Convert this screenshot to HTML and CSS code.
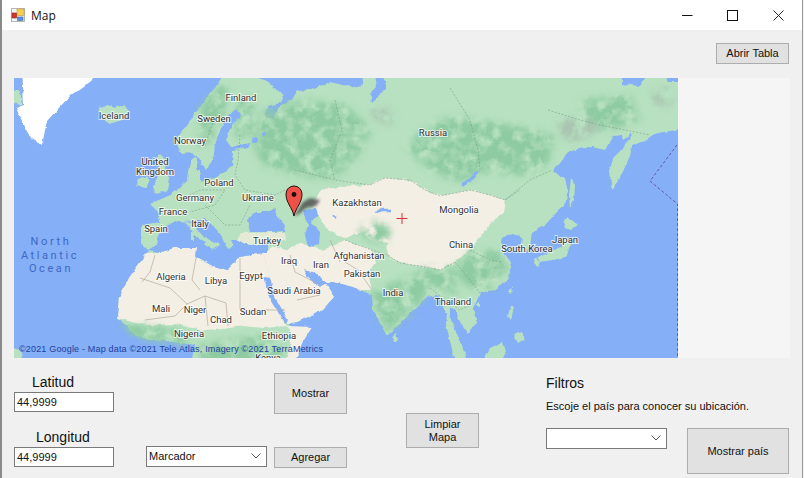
FILE: index.html
```html
<!DOCTYPE html>
<html lang="es">
<head>
  <meta charset="UTF-8" />
  <title>Map</title>
  <link rel="stylesheet" href="styles.css">
</head>
<body>

  <div class="window">
    <div class="titlebar">
      <svg class="app-icon" viewBox="0 0 14 14" width="14" height="14">
        <rect x="0.5" y="0.5" width="13" height="13" fill="#f4f4f4" stroke="#b5b5b5"/>
        <rect x="6" y="1" width="7" height="6.5" fill="#f5cf55" stroke="#c99a2a" stroke-width="0.6"/>
        <rect x="1" y="5" width="4.5" height="5" fill="#d8342c" stroke="#8c1f1a" stroke-width="0.6"/>
        <rect x="6.5" y="9" width="5.5" height="3.5" fill="#5b8fd8" stroke="#3a68a8" stroke-width="0.6"/>
      </svg>
      <span class="title">Map</span>
      <div class="win-buttons">
        <div class="win-btn">
          <svg viewBox="0 0 11 11" width="11" height="11"><path d="M0 5.5H10.5" stroke="#111" fill="none"/></svg>
        </div>
        <div class="win-btn">
          <svg viewBox="0 0 11 11" width="11" height="11"><rect x="0.5" y="0.5" width="10" height="10" stroke="#111" fill="none"/></svg>
        </div>
        <div class="win-btn">
          <svg viewBox="0 0 11 11" width="11" height="11"><path d="M0.5 0.5L10.5 10.5M10.5 0.5L0.5 10.5" stroke="#111" fill="none" stroke-width="0.9"/></svg>
        </div>
      </div>
    </div>

    <div class="toolbar">
      <button class="btn btn-tabla">Abrir Tabla</button>
    </div>

    <div class="map-box">
      <svg class="map" viewBox="14 78 664 280" width="664" height="280">
        <defs>
          <filter id="mottle" filterUnits="userSpaceOnUse" x="0" y="60" width="700" height="310" color-interpolation-filters="sRGB">
            <feGaussianBlur in="SourceGraphic" stdDeviation="3.5" result="b"/>
            <feTurbulence type="fractalNoise" baseFrequency="0.08" numOctaves="3" seed="4"/>
            <feColorMatrix values="0 0 0 0 0  0 0 0 0 0  0 0 0 0 0  3 0 0 0 -0.75"/>
            <feComposite in="b" operator="in"/>
          </filter>
          <filter id="coast" filterUnits="userSpaceOnUse" x="0" y="60" width="700" height="310" color-interpolation-filters="sRGB">
            <feTurbulence type="fractalNoise" baseFrequency="0.14" numOctaves="3" seed="7" result="n"/>
            <feDisplacementMap in="SourceGraphic" in2="n" scale="4" xChannelSelector="R" yChannelSelector="G"/>
            <feGaussianBlur stdDeviation="0.4"/>
          </filter>
          <filter id="shade" x="-30%" y="-30%" width="160%" height="160%"><feGaussianBlur stdDeviation="1.5"/></filter>
        </defs>
        <rect class="ocean" x="14" y="78" width="664" height="280"/>

        <g filter="url(#coast)">
          <!-- tierra -->
          <path class="land" d="M227 68L258 68 258 78 273 86 283 95 280 103 268 106 265 115 273 120 278 108 292 100 297 91 308 90 317 87 330 82 342 85 353 86 358 88 363 83 362 68 690 68 690 115 677 130 670 131 657 133 647 140 632 146 630 156 620 178 612 190 609 171 613 158 625 146 633 133 623 140 622 135 613 136 605 150 592 147 573 150 563 158 553 171 565 178 568 191 565 205 557 212 545 225 533 232 531 245 525 253 520 248 522 238 513 234 503 236 502 243 505 253 512 267 507 280 493 290 480 293 473 310 477 323 467 333 460 322 457 313 450 307 450 318 445 310 437 295 427 297 407 317 387 336 373 310 372 295 360 290 347 285 333 282 325 282 335 297 323 310 297 322 288 324 292 327 312 327 302 343 293 368 190 368 195 345 181 343 165 341 150 340 135 335 124 323 117 317 119 298 129 278 147 253 148 250 141 243 141 225 160 222 158 212 150 204 168 196 178 190 188 180 191 160 197 158 197 170 205 170 199 158 192 153 182 154 174 140 181 133 194 115 207 98 217 85Z"/>
          <path class="land" d="M447 312L453 325 462 345 468 368 456 368 450 340 446 325Z"/>
          <path class="land" d="M6 345L20 350 24 368 6 368Z"/>
          <path class="land" d="M6 92L19 90 22 98 22 106 17 104 6 100Z"/>
          <path class="land" d="M478 368L490 348 503 342 506 352 498 368Z"/>

          <!-- bosque -->
          <g filter="url(#mottle)">
            <path class="forest" d="M262 112L300 100 345 105 372 130 355 160 335 178 300 176 262 165 250 135Z"/>
            <path class="forest" d="M405 145L440 118 470 118 510 125 555 135 548 165 525 175 480 172 465 182 440 175 420 162Z"/>
            <path class="forest" d="M200 108L215 90 228 82 226 112 212 140 200 148Z"/>
            <path class="forest" d="M236 100L255 98 250 135 236 140Z"/>
            <path class="forest" d="M580 100L630 95 640 120 610 130 585 125Z"/>
            <path class="snow" d="M558 120L590 118 600 130 575 142 560 135Z"/>
            <path class="snow" d="M652 90L672 88 672 105 655 105Z"/>
            <path class="snow" d="M372 105L395 112 392 125 372 118Z"/>
          </g>

          <!-- desierto -->
          <path class="sand" d="M117 318L119 298 129 278 147 253 161 252 174 248 197 248 196 257 211 265 227 270 240 257 263 252 270 278 285 322 287 326 263 328 244 326 207 331 174 324 147 326Z"/>
          <path class="sand" d="M288 326L312 327 302 343 293 368 284 368 291 340Z"/>
          <path class="sand" d="M263 252L275 246 285 250 300 243 315 248 322 250 335 245 345 240 358 245 372 250 376 262 368 272 372 290 360 290 347 285 333 282 325 282 335 297 323 310 297 322 288 323 272 303 270 278Z"/>
          <path class="sand" d="M312 205L320 190 345 186 370 185 385 178 410 180 425 190 440 196 470 190 490 195 505 200 503 213 492 222 480 236 470 250 455 262 440 270 420 266 400 263 387 255 388 243 370 240 362 232 345 238 330 232 322 222Z"/>

          <g filter="url(#mottle)">
            <path class="forest" d="M358 230L372 222 390 226 388 242 370 242Z"/>
            <path class="forest" d="M372 292L420 272 432 282 425 297 407 317 388 333 376 310Z"/>
            <path class="forest" d="M470 252L498 250 508 270 490 288 470 288 452 272Z"/>
            <path class="forest" d="M420 268L450 268 458 296 440 294Z"/>
            <path class="forest" d="M200 345L260 335 285 345 280 368 200 368Z"/>
            <path class="forest" d="M120 322L180 330 190 345 135 338Z"/>
          </g>

          <!-- mares -->
          <path class="sea" d="M236 109L228 118 220 130 215 145 213 160 205 170 200 170 200 182 215 178 225 172 232 165 233 150 250 147 250 143 231 147 226 140 232 125 240 115Z"/>
          <path class="sea" d="M148 250L158 244 157 238 166 226 178 221 190 222 205 218 215 228 226 240 235 240 250 245 268 243 268 252 240 257 227 270 211 265 196 257 197 248 174 248 161 252Z"/>
          <path class="sea" d="M247 220L256 212 270 212 277 208 276 216 285 225 284 231 270 232 250 232Z"/>
          <path class="sea" d="M303 212L316 208 318 214 311 222 320 232 319 245 308 247 305 235 308 225Z"/>
          <path class="sea" d="M263 277L270 278 275 297 288 320 285 323 272 303Z"/>
          <path class="sea" d="M303 270L313 272 327 282 320 287 308 278Z"/>
          <path class="sea" d="M373 68L380 68 387 88 372 102 370 94 376 88Z"/>
          <path class="sea" d="M622 68L652 68 640 86 622 84Z"/>
          <path class="sea" d="M664 68L690 68 690 82 668 82Z"/>
          <path class="sea-line" d="M462 186L470 180 478 171"/>
          <path class="sea-line" d="M376 212L382 210 391 210"/>
          <path class="sea-line" d="M333 216L336 218"/>
          <circle class="sea" cx="255" cy="140" r="3"/>
          <circle class="sea" cx="264" cy="134" r="2"/>

          <!-- islas y penínsulas -->
          <path class="ice" d="M22 68L105 68 84 86 71 95 57 110 47 121 42 145 31 138 22 121 16 108 24 105Z"/>
          <path class="land" d="M99 107L108 105 115 108 124 105 129 113 122 120 110 124 100 118Z"/>
          <path class="land" d="M137 186L138 179 146 176 149 180 146 188Z"/>
          <path class="land" d="M153 188L157 178 160 168 154 160 160 154 166 160 165 170 170 180 168 190 156 194Z"/>
          <path class="land" d="M185 222L193 224 202 235 214 243 218 241 219 246 212 250 208 244 196 236Z"/>
          <path class="land" d="M222 225L230 238 234 246 228 249 224 240 219 232Z"/>
          <path class="land" d="M191 232L194 232 194 240 191 240Z"/>
          <path class="land" d="M203 243L211 243 208 247Z"/>
          <path class="sand-light" d="M240 233L285 232 286 241 268 243 250 245 236 240Z"/>
          <path class="land" d="M537 257L548 252 560 248 567 236 570 245 566 257 552 260 540 262Z"/>
          <path class="land" d="M563 222L568 217 578 225 570 230 565 228Z"/>
          <path class="land" d="M535 258L540 262 538 267 534 263Z"/>
          <path class="land" d="M571 178L575 186 574 200 570 208 569 195Z"/>
          <path class="land" d="M509 293L513 286 512 294Z"/>
          <path class="land" d="M475 305L480 302 480 307Z"/>
          <path class="land" d="M510 307L514 307 511 320 508 316Z"/>
          <path class="land" d="M514 334L522 331 525 340 518 342Z"/>
          <path class="land" d="M393 335L396 333 398 340 394 342Z"/>
        </g>

        <!-- fronteras -->
        <path class="border" d="M295 170L335 180 370 185 385 178 410 180 425 190 440 196 470 190 490 195 505 200 520 190"/>
        <path class="border" d="M345 240L358 245 372 250 387 255 400 263 420 266 440 270 455 262"/>
        <path class="border" d="M335 100L342 130 330 160 335 180M450 88L470 120 478 150 480 170M548 110L580 120 600 125 650 135M505 200L530 180 552 170"/>
        <path class="border" d="M470 250L490 260 502 262M455 262L470 280 480 293M430 288L445 300 460 310 470 305"/>
        <path class="border" d="M240 135L238 160 235 175 245 190 275 195 295 185M214 120L205 145"/>
        <path class="border" d="M180 200L200 190 225 190 215 205 190 212M205 205L225 225 240 225 250 205"/>
        <path class="border-sand" d="M155 255L150 272 142 282M140 278L170 288 187 304 205 296 226 303M187 304L175 316 145 320M205 296L208 326M226 303L228 326M240 270L240 310 262 310 285 310M290 255L295 272 320 285M345 262L358 270 372 290"/>
        <path class="border-sand" d="M196 258L192 280 200 290M240 258L240 270M297 300L320 295M330 240L340 262"/>

        <path class="date-line" d="M677 145L650 181 677.5 204V358"/>

        <g class="labels">
          <text x="241" y="101">Finland</text>
          <text x="114" y="119">Iceland</text>
          <text x="214" y="122">Sweden</text>
          <text x="190" y="144">Norway</text>
          <text x="155" y="165">United</text>
          <text x="155" y="175">Kingdom</text>
          <text x="219" y="186">Poland</text>
          <text x="195" y="201">Germany</text>
          <text x="173" y="215">France</text>
          <text x="200" y="227">Italy</text>
          <text x="156" y="232">Spain</text>
          <text x="258" y="201">Ukraine</text>
          <text x="267" y="244">Turkey</text>
          <text x="433" y="136">Russia</text>
          <text x="357" y="206">Kazakhstan</text>
          <text x="459" y="213">Mongolia</text>
          <text x="461" y="248">China</text>
          <text x="565" y="243">Japan</text>
          <text x="527" y="252">South Korea</text>
          <text x="289" y="264">Iraq</text>
          <text x="321" y="268">Iran</text>
          <text x="359" y="259">Afghanistan</text>
          <text x="362" y="277">Pakistan</text>
          <text x="393" y="296">India</text>
          <text x="453" y="305">Thailand</text>
          <text x="251" y="279">Egypt</text>
          <text x="294" y="294">Saudi Arabia</text>
          <text x="171" y="280">Algeria</text>
          <text x="216" y="284">Libya</text>
          <text x="161" y="312">Mali</text>
          <text x="195" y="313">Niger</text>
          <text x="221" y="323">Chad</text>
          <text x="253" y="315">Sudan</text>
          <text x="189" y="337">Nigeria</text>
          <text x="279" y="339">Ethiopia</text>
          <text x="268" y="361">Kenya</text>
        </g>

        <g class="ocean-name">
          <text x="51" y="245">North</text>
          <text x="50" y="259">Atlantic</text>
          <text x="51" y="272">Ocean</text>
        </g>

        <text class="copy" x="19" y="352" textLength="304">©2021 Google - Map data ©2021 Tele Atlas, Imagery ©2021 TerraMetrics</text>

        <path class="cross" d="M396.5 218.5H407.5M402 213V224"/>
        <path class="pin-shadow" filter="url(#shade)" d="M294 216L303 202 310 198 320 200 316 206 306 208 299 214Z"/>
        <path class="pin" d="M294 216C292 207 286 203 286 194 A8 8 0 1 1 302 194C302 203 296 207 294 216Z"/>
        <circle cx="294" cy="194.5" r="2.4" fill="#1d0d0b"/>
      </svg>
    </div>

    <div class="controls">
      <div class="col-coords">
        <label class="big-label label-lat">Latitud</label>
        <input class="field" type="text" value="44,9999">
        <label class="big-label label-lon">Longitud</label>
        <input class="field" type="text" value="44,9999">
      </div>

      <div class="col-marker">
        <div class="combo">
          <span>Marcador</span>
          <svg viewBox="0 0 10 6" width="10" height="6"><path d="M0.5 0.5L5 5 9.5 0.5" stroke="#555" fill="none"/></svg>
        </div>
      </div>

      <div class="col-actions">
        <button class="btn btn-mostrar">Mostrar</button>
        <button class="btn btn-agregar">Agregar</button>
      </div>

      <div class="col-clear">
        <button class="btn btn-limpiar">Limpiar<br>Mapa</button>
      </div>

      <div class="col-filters">
        <div class="big-label">Filtros</div>
        <p class="hint">Escoje el país para conocer su ubicación.</p>
        <div class="filter-row">
          <div class="combo">
            <span></span>
            <svg viewBox="0 0 10 6" width="10" height="6"><path d="M0.5 0.5L5 5 9.5 0.5" stroke="#555" fill="none"/></svg>
          </div>
          <button class="btn btn-pais">Mostrar país</button>
        </div>
      </div>
    </div>
  </div>

</body>
</html>
```

FILE: styles.css
```css
html, body {
  margin: 0;
  height: 478px;
  overflow: hidden;
}

body {
  font-family: "Liberation Sans", Arial, sans-serif;
  font-size: 11px;
  color: #111;
  background: #f0f0f0;
}

.window {
  height: 478px;
  box-sizing: border-box;
  margin-right: 1px;
  border-left: 2px solid #8a8a8a;
  border-right: 1px solid #9a9a9a;
  background: #f0f0f0;
}

.titlebar {
  display: flex;
  align-items: center;
  height: 30px;
  padding-left: 9px;
  background: #fff;
}

.app-icon {
  margin-right: 6px;
}

.title {
  font-family: "Open Sans", sans-serif;
  font-size: 12px;
}

.win-buttons {
  display: flex;
  margin-left: auto;
}

.win-btn {
  display: flex;
  align-items: center;
  justify-content: center;
  width: 45px;
  height: 30px;
}

.win-btn:last-child {
  width: 47px;
}

.toolbar {
  display: flex;
  justify-content: flex-end;
  padding: 13px 13px 14px 0;
}

.btn {
  font-family: "Liberation Sans", Arial, sans-serif;
  font-size: 11px;
  color: #111;
  background: #e1e1e1;
  border: 1px solid #adadad;
  padding: 0;
  width: 73px;
  display: block;
  line-height: 13px;
}

.btn-tabla { height: 21px; }
.btn-mostrar { height: 41px; }
.btn-agregar { height: 21px; margin-top: 33px; }
.btn-limpiar { height: 35px; }
.btn-pais { width: 102px; height: 46px; }

.map-box {
  width: 776px;
  height: 280px;
  margin-left: 12px;
  background: #f5f5f5;
}

.map {
  display: block;
}

.ocean { fill: #85aff6; }
.land { fill: #b7e1c0; }
.forest { fill: #8ecba2; }
.snow { fill: #a9c4b0; }
.sand { fill: #f3efe5; }
.sand-light { fill: #e4ead6; }
.ice { fill: #fff; }
.sea { fill: #85aff6; }
.sea-line { fill: none; stroke: #85aff6; stroke-width: 2.5; }

.border {
  fill: none;
  stroke: #6f8a79;
  stroke-width: 0.6;
  stroke-dasharray: 2 1.5;
  opacity: 0.8;
}

.border-sand {
  fill: none;
  stroke: #b3aa9d;
  stroke-width: 0.7;
}

.date-line {
  fill: none;
  stroke: #6a5aa6;
  stroke-width: 1;
  stroke-dasharray: 3 2;
}

.labels text {
  font-family: Roboto, sans-serif;
  font-size: 9.5px;
  fill: #333;
  text-anchor: middle;
  stroke: rgba(255, 255, 255, 0.7);
  stroke-width: 2px;
  paint-order: stroke;
}

.ocean-name text {
  font-family: Roboto, sans-serif;
  font-size: 11px;
  letter-spacing: 2.6px;
  fill: #3f68c4;
  text-anchor: middle;
}

.copy {
  font-family: "Liberation Sans", Arial, sans-serif;
  font-size: 9px;
  fill: #1f3f9e;
}

.cross {
  fill: none;
  stroke: #d8323a;
  stroke-width: 1;
}

.pin-shadow { fill: #4a4a4a; opacity: 0.8; }

.pin {
  fill: #ef5148;
  stroke: #2a1210;
  stroke-width: 1;
}

.controls {
  display: flex;
  align-items: flex-start;
  padding-left: 12px;
}

.big-label {
  display: block;
  font-size: 14px;
  line-height: 16px;
  color: #111;
}

.field {
  display: block;
  box-sizing: border-box;
  width: 100px;
  height: 20px;
  padding: 0 2px;
  border: 1px solid #7a7a7a;
  background: #fff;
  font-family: "Liberation Sans", Arial, sans-serif;
  font-size: 11px;
  color: #111;
  outline: none;
}

.col-coords {
  width: 100px;
  padding-top: 16px;
}

.label-lat { padding-left: 18px; margin-bottom: 2px; }
.label-lon { padding-left: 22px; margin-top: 17px; margin-bottom: 2px; }

.combo {
  display: flex;
  align-items: center;
  justify-content: space-between;
  box-sizing: border-box;
  width: 121px;
  height: 21px;
  padding: 0 5px 2px 2px;
  border: 1px solid #7a7a7a;
  background: #fff;
}

.col-marker {
  margin-left: 32px;
  padding-top: 88px;
}

.col-actions {
  margin-left: 7px;
  padding-top: 15px;
}

.col-clear {
  margin-left: 59px;
  padding-top: 55px;
}

.col-filters {
  margin-left: 67px;
  padding-top: 17px;
}

.hint {
  margin: 9px 0 0;
  line-height: 13px;
}

.filter-row {
  display: flex;
  align-items: flex-start;
  gap: 20px;
  margin-top: 15px;
}
```
